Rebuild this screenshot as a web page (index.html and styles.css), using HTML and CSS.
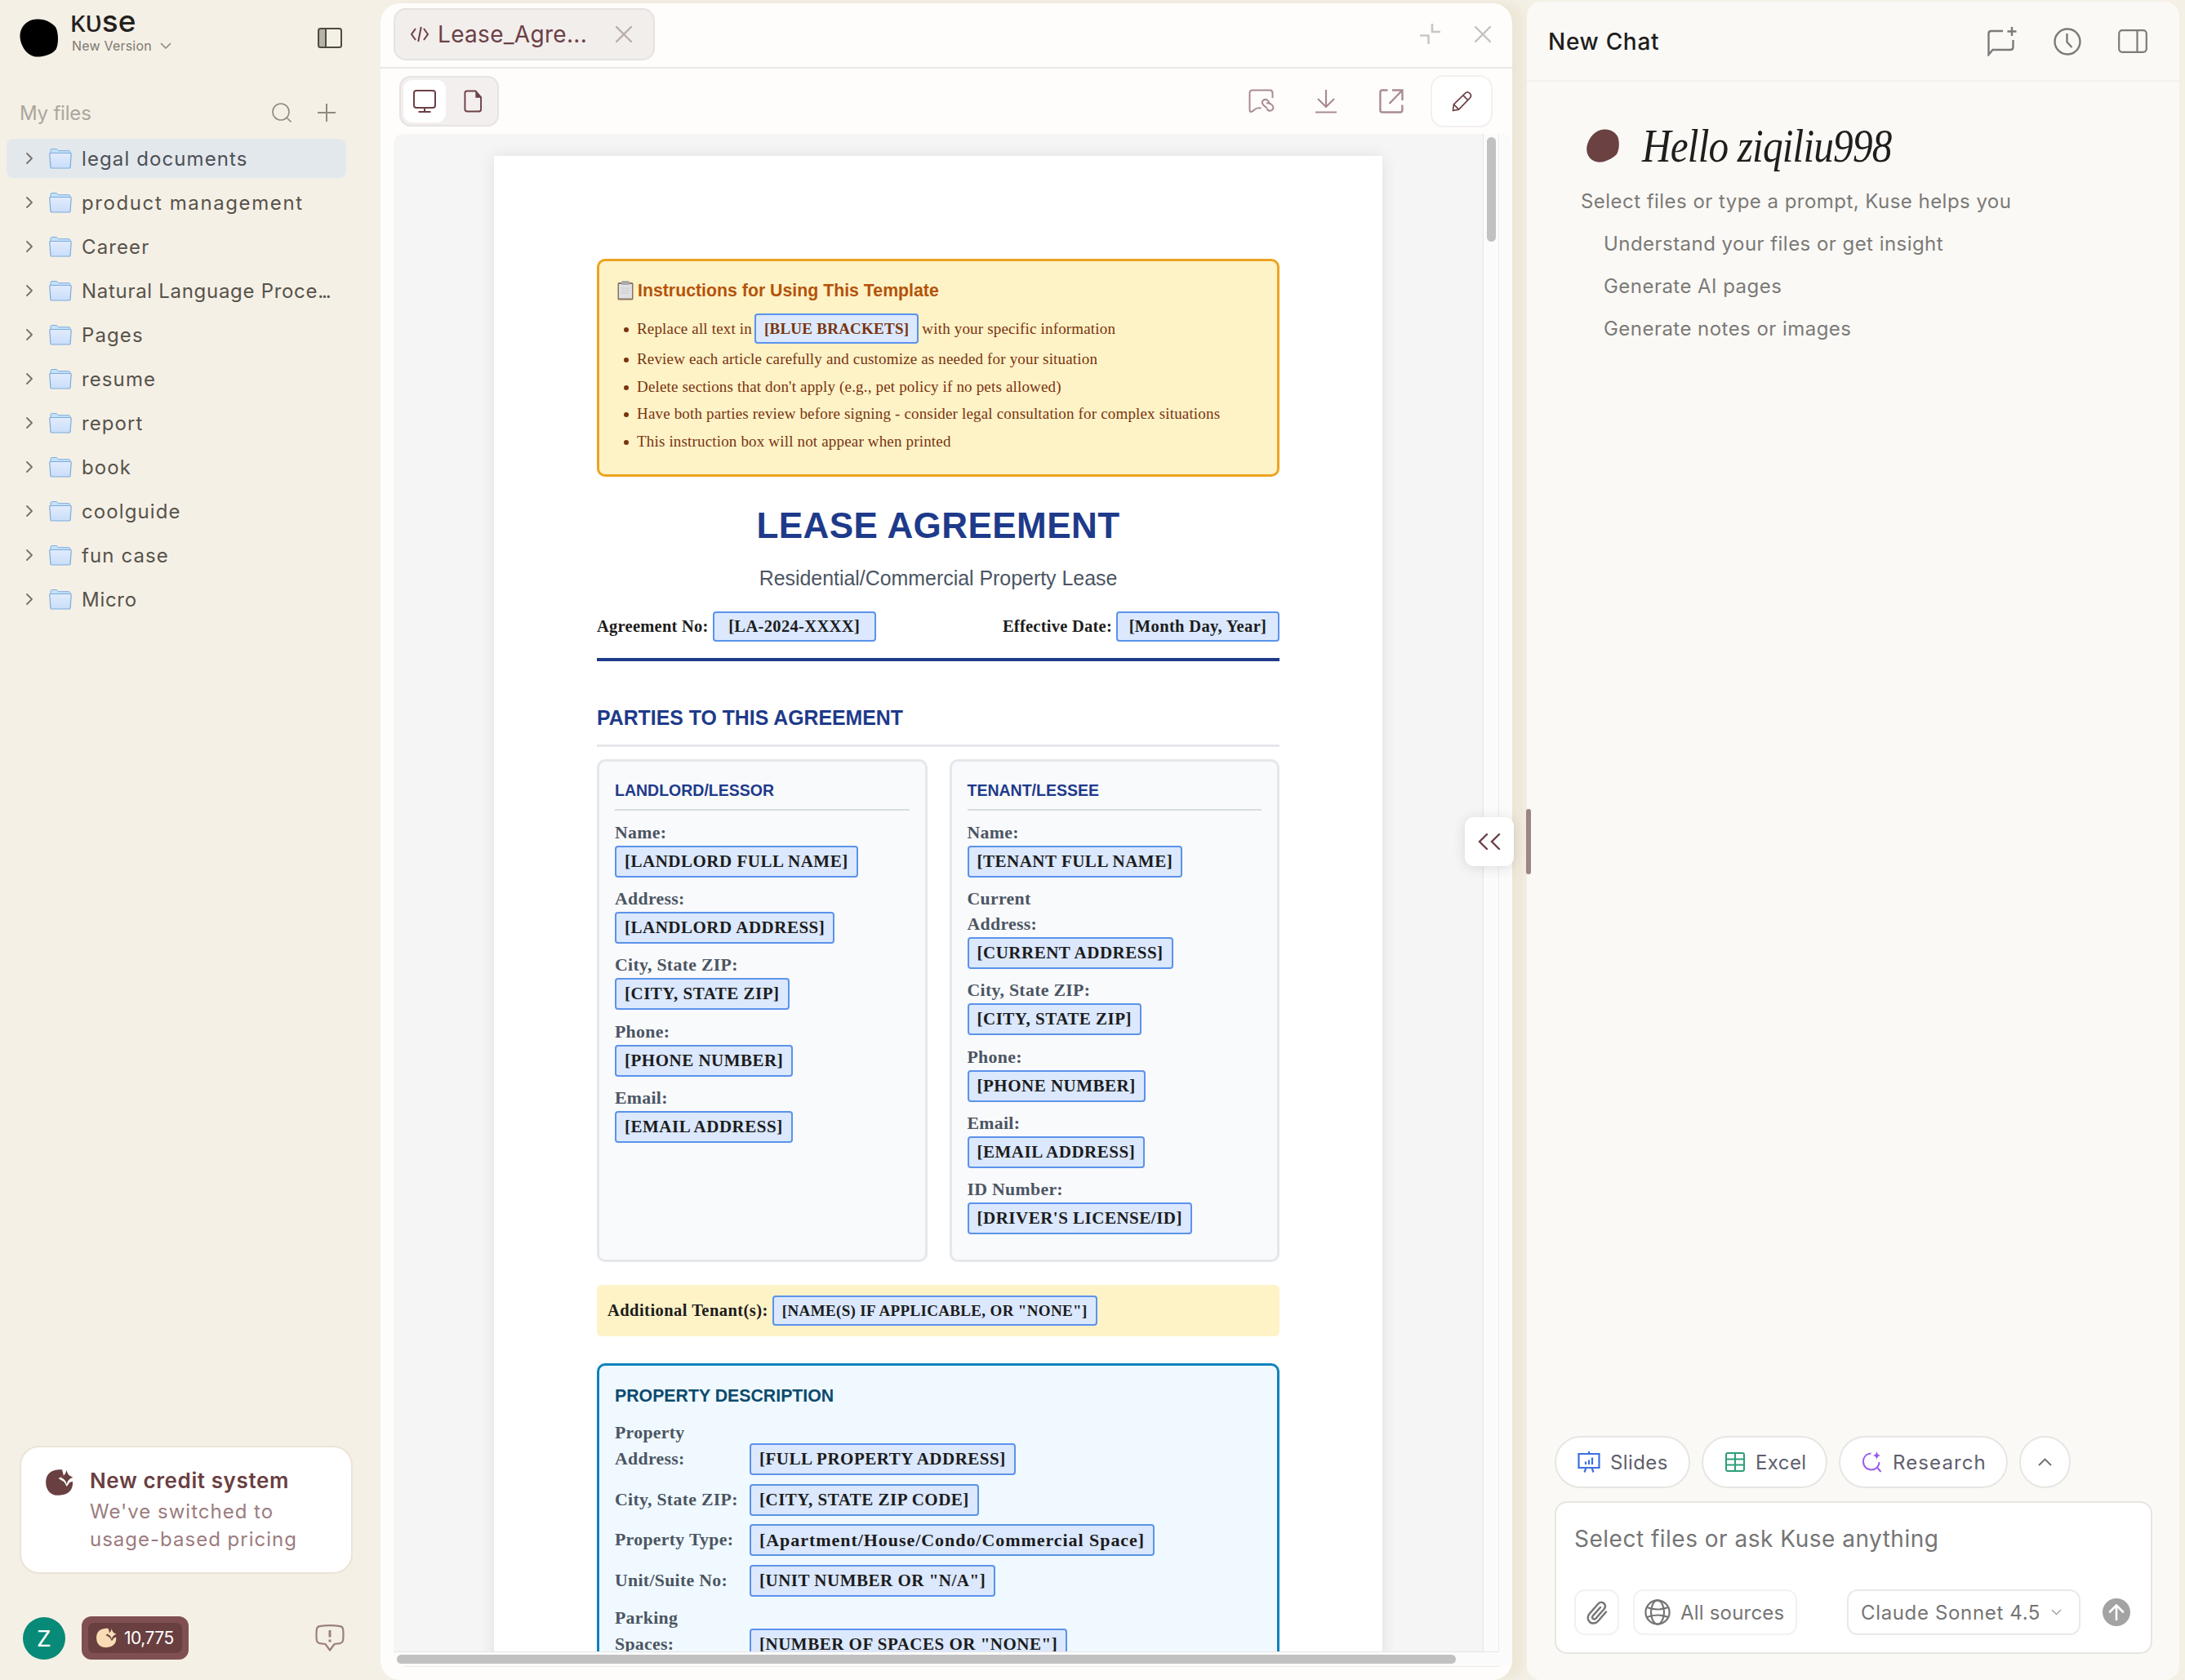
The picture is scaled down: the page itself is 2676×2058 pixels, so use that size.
FILE: index.html
```html
<!DOCTYPE html>
<html lang="en">
<head>
  <meta charset="UTF-8" />
  <meta name="viewport" content="width=device-width, initial-scale=1.0"/>
  <title>Kuse</title>
  <link rel="stylesheet" href="styles.css">
</head>
<body>
  <!-- shared icons -->
  <svg class="defs" width="0" height="0">
    <defs>
      <linearGradient id="folderFill" x1="0" y1="0" x2="0" y2="1">
        <stop offset="0" stop-color="#e2ebfc"/>
        <stop offset="1" stop-color="#c9defa"/>
      </linearGradient>
      <symbol id="chev" viewBox="0 0 8 14"><path d="M1 1l6 6-6 6" fill="none" stroke="currentColor" stroke-width="1.8" stroke-linecap="round" stroke-linejoin="round"/></symbol>
      <symbol id="folder" viewBox="0 0 28 26">
        <path d="M2 7V3.2C2 2 2.7 1.5 3.6 1.5h5.2c.8 0 1.2.4 1.7 1l.9 1.2h12.800c1 0 1.800.6 1.800 1.600V7z" fill="#c4e2fb" stroke="#7dabdc" stroke-width="1"/>
        <path d="M.8 7.600c0-.7.5-1.100 1.200-1.100h24c.7 0 1.200.5 1.200 1.100l-1.100 16c-.1.900-.6 1.400-1.500 1.400H3.400c-.9 0-1.400-.5-1.500-1.400z" fill="url(#folderFill)" stroke="#7dabdc" stroke-width="1.200"/>
      </symbol>
      <symbol id="credit" viewBox="0 0 34 32">
        <path d="M20 .3C9 -.8 1 4 .2 14 -.5 24 5 31.500 14 31.800c9 .4 17.500-3 18.800-12 .3-2 .4-3 0-5l-3.500 1.200-3.600 5-3-5.400-7.200-4.600 6.500-3.600z" fill="currentColor"/>
        <path d="M25.500.5c1 5 2.500 7 8 9.200-5.200 2-6.800 4-7.800 9-1-5-2.600-7-8-9 5.300-2 6.800-4.200 7.800-9.200z" fill="currentColor"/>
      </symbol>
    </defs>
  </svg>

  <aside class="sidebar">
    <div class="brand">
      <svg class="brand-blob" width="48" height="47" viewBox="0 0 48 47"><path d="M21 .5c7-.8 17 2.500 22.500 9C48 15 48 32 44.500 37.500 40 44 28 47 20 46.500 9 45.500 1 33 .5 22 .3 10 9 1 21 .5z"/></svg>
      <div class="brand-text">
        <div class="brand-name">ᴋᴜse</div>
        <div class="brand-version">New Version
          <svg width="14" height="8" viewBox="0 0 14 8"><path d="M1 1l6 6 6-6" fill="none" stroke="#8a867c" stroke-width="1.500"/></svg>
        </div>
      </div>
      <svg class="brand-panel" width="30" height="25" viewBox="0 0 30 25">
        <rect x="1" y="1" width="9" height="23" fill="#b5b2a8"/>
        <rect x="1" y="1" width="28" height="23" rx="2.500" fill="none" stroke="#4f4a42" stroke-width="2"/>
        <path d="M10 1v23" stroke="#4f4a42" stroke-width="2"/>
      </svg>
    </div>

    <div class="files-head">
      <span>My files</span>
      <svg class="search" width="24" height="24" viewBox="0 0 24 24"><circle cx="11" cy="11" r="10" fill="none" stroke="#8f8b80" stroke-width="1.600"/><path d="M18.500 18.500l5 5" stroke="#8f8b80" stroke-width="1.600"/></svg>
      <svg width="22" height="22" viewBox="0 0 22 22"><path d="M11 0v22M0 11h22" stroke="#8f8b80" stroke-width="2"/></svg>
    </div>

    <ul class="files">
      <li class="file active"><svg class="chev"><use href="#chev"/></svg><svg class="folder"><use href="#folder"/></svg><span>legal documents</span></li>
      <li class="file wide"><svg class="chev"><use href="#chev"/></svg><svg class="folder"><use href="#folder"/></svg><span>product management</span></li>
      <li class="file"><svg class="chev"><use href="#chev"/></svg><svg class="folder"><use href="#folder"/></svg><span>Career</span></li>
      <li class="file long"><svg class="chev"><use href="#chev"/></svg><svg class="folder"><use href="#folder"/></svg><span>Natural Language Proce<span class="dots">...</span></span></li>
      <li class="file"><svg class="chev"><use href="#chev"/></svg><svg class="folder"><use href="#folder"/></svg><span>Pages</span></li>
      <li class="file"><svg class="chev"><use href="#chev"/></svg><svg class="folder"><use href="#folder"/></svg><span>resume</span></li>
      <li class="file"><svg class="chev"><use href="#chev"/></svg><svg class="folder"><use href="#folder"/></svg><span>report</span></li>
      <li class="file"><svg class="chev"><use href="#chev"/></svg><svg class="folder"><use href="#folder"/></svg><span>book</span></li>
      <li class="file"><svg class="chev"><use href="#chev"/></svg><svg class="folder"><use href="#folder"/></svg><span>coolguide</span></li>
      <li class="file"><svg class="chev"><use href="#chev"/></svg><svg class="folder"><use href="#folder"/></svg><span>fun case</span></li>
      <li class="file long"><svg class="chev"><use href="#chev"/></svg><svg class="folder"><use href="#folder"/></svg><span>Micro</span></li>
    </ul>

    <div class="credit-card">
      <svg class="credit-icon"><use href="#credit"/></svg>
      <div>
        <div class="credit-title">New credit system</div>
        <div class="credit-sub">We've switched to<br>usage-based pricing</div>
      </div>
    </div>

    <div class="account">
      <div class="avatar">Z</div>
      <div class="credits"><div class="credits-inner"><svg class="coin"><use href="#credit"/></svg><span>10,775</span></div></div>
      <svg class="feedback" width="36" height="34" viewBox="0 0 36 34">
        <path d="M5.500 2.200Q18 .2 30.500 2.200Q34 2.800 34.200 6.500Q34.800 12 34.200 18.500Q33.800 22.500 30 23.200L23.500 24L18 31.500L12.500 24L6 23.200Q2 22.500 1.800 18.500Q1.200 12 1.800 6.500Q2 2.800 5.500 2.200z" fill="none" stroke="#9b7f7e" stroke-width="2.200" stroke-linejoin="round"/>
        <path d="M18 7v8.500M18 18.500v3" stroke="#9b7f7e" stroke-width="3"/>
      </svg>
    </div>
  </aside>

  <main class="viewer">
    <div class="tabs">
      <div class="tab">
        <svg width="24" height="20" viewBox="0 0 24 20"><path d="M7 3L2 10l5 7M17 3l5 7-5 7M13.800 1l-3.600 18" fill="none" stroke="#6b4046" stroke-width="2"/></svg>
        <span>Lease_Agre...</span>
        <svg width="20" height="20" viewBox="0 0 20 20"><path d="M1 1l18 18M19 1L1 19" stroke="#b9b0ad" stroke-width="2.400" stroke-linecap="round"/></svg>
      </div>
      <svg class="collapse" width="26" height="26" viewBox="0 0 26 26"><path d="M15 0v10h10M0 14.500h10.500V25" fill="none" stroke="#cbc6c4" stroke-width="2.600"/></svg>
      <svg width="20" height="20" viewBox="0 0 20 20"><path d="M1 1l18 18M19 1L1 19" stroke="#c6c0be" stroke-width="2.400" stroke-linecap="round"/></svg>
    </div>

    <div class="toolbar">
      <div class="toggle">
        <div class="toggle-item on">
          <svg width="28" height="28" viewBox="0 0 28 28"><rect x="1" y="1" width="26" height="21" rx="3" fill="none" stroke="#6b4046" stroke-width="2"/><path d="M14 22v5M6.500 27h15" stroke="#6b4046" stroke-width="2"/></svg>
        </div>
        <div class="toggle-item doc">
          <svg width="23" height="28" viewBox="0 0 24 28"><path d="M15 1H4.500C2.500 1 1.500 2 1.500 3.500v21C1.500 26 2.500 27 4.500 27h15c1.500 0 2.500-1 2.500-2.500V9z" fill="none" stroke="#6b4046" stroke-width="2"/><path d="M15 1l7 8.500h-7z" fill="#6b4046"/></svg>
        </div>
      </div>
      <div class="actions">
        <svg width="32" height="30" viewBox="0 0 32 30" fill="none" stroke="#a98c90" stroke-width="2"><path d="M15.500 23.500c-5-1-7 .5-9.500 3-2 2-4.500 2-4.500-.5V5c0-2.500 1-3.500 3.500-3.500h21.500c2.500 0 3 1 3 3.500v6"/><path d="M24.500 18.500c2.500-3-3-7.500-6.500-4.500-3.500 3.500 2 7.500 5 9.500M22 17.500c4-1.500 10 3 8 7-2 3.500-6.500 2.500-7-.5"/></svg>
        <svg width="26" height="29" viewBox="0 0 26 29" fill="none" stroke="#a98c90" stroke-width="2.200"><path d="M13 0v21M3 11l10 10 10-10M0 27.500h26"/></svg>
        <svg width="30" height="30" viewBox="0 0 30 30" fill="none" stroke="#a98c90" stroke-width="2.400"><path d="M10.500 1.500H4c-1.800 0-2.600.8-2.600 2.600v21.800c0 1.800.8 2.600 2.600 2.600h21.800c1.800 0 2.600-.8 2.600-2.600V19.500M16 1.500h12.500V14M28 2L12.500 18"/></svg>
        <div class="edit">
          <svg width="25" height="25" viewBox="0 0 26 26" fill="none" stroke="#6b4046" stroke-width="1.700" stroke-linejoin="round"><path d="M1.500 24.500L2.500 16.500L17 2.500c2-2 4.500-1.500 6 0s2 4 0 6L9 23zM14.500 5l6 6M2.500 16.500L9 23"/></svg>
        </div>
      </div>
    </div>

    <div class="frame">
      <div class="canvas">
        <article class="page">
          <section class="instructions">
            <h4>
              <svg width="20" height="24" viewBox="0 0 20 24"><rect x=".5" y="2" width="19" height="21.500" rx="1.500" fill="#8b7462"/><rect x="2" y="4" width="16" height="17.500" fill="#dfe0e3"/><rect x="5" y="0" width="10" height="5" rx="1.500" fill="#aaa9a8"/><path d="M5 9h10M5 12h10M5 15h10" stroke="#c6c8cc"/></svg>
              <span>Instructions for Using This Template</span>
            </h4>
            <ul>
              <li class="tall"><span>Replace all text in</span> <span class="chip small">[BLUE BRACKETS]</span> <span class="after">with your specific information</span></li>
              <li>Review each article carefully and customize as needed for your situation</li>
              <li>Delete sections that don't apply (e.g., pet policy if no pets allowed)</li>
              <li>Have both parties review before signing - consider legal consultation for complex situations</li>
              <li>This instruction box will not appear when printed</li>
            </ul>
          </section>

          <header class="doc-head">
            <h1>LEASE AGREEMENT</h1>
            <p>Residential/Commercial Property Lease</p>
            <div class="meta">
              <div><b>Agreement No:</b><span class="chip meta-chip">[LA-2024-XXXX]</span></div>
              <div><b>Effective Date:</b><span class="chip meta-chip">[Month Day, Year]</span></div>
            </div>
          </header>

          <h2>PARTIES TO THIS AGREEMENT</h2>

          <div class="parties">
            <section class="party">
              <h3>LANDLORD/LESSOR</h3>
              <div class="field"><label>Name:</label><span class="chip">[LANDLORD FULL NAME]</span></div>
              <div class="field"><label>Address:</label><span class="chip">[LANDLORD ADDRESS]</span></div>
              <div class="field"><label>City, State ZIP:</label><span class="chip">[CITY, STATE ZIP]</span></div>
              <div class="field"><label>Phone:</label><span class="chip">[PHONE NUMBER]</span></div>
              <div class="field"><label>Email:</label><span class="chip">[EMAIL ADDRESS]</span></div>
            </section>
            <section class="party">
              <h3>TENANT/LESSEE</h3>
              <div class="field"><label>Name:</label><span class="chip">[TENANT FULL NAME]</span></div>
              <div class="field"><label>Current<br>Address:</label><span class="chip">[CURRENT ADDRESS]</span></div>
              <div class="field"><label>City, State ZIP:</label><span class="chip">[CITY, STATE ZIP]</span></div>
              <div class="field"><label>Phone:</label><span class="chip">[PHONE NUMBER]</span></div>
              <div class="field"><label>Email:</label><span class="chip">[EMAIL ADDRESS]</span></div>
              <div class="field"><label>ID Number:</label><span class="chip">[DRIVER'S LICENSE/ID]</span></div>
            </section>
          </div>

          <div class="additional"><b>Additional Tenant(s):</b><span class="chip small">[NAME(S) IF APPLICABLE, OR "NONE"]</span></div>

          <section class="property">
            <h3>PROPERTY DESCRIPTION</h3>
            <div class="row"><label>Property<br>Address:</label><span class="chip">[FULL PROPERTY ADDRESS]</span></div>
            <div class="row"><label>City, State ZIP:</label><span class="chip">[CITY, STATE ZIP CODE]</span></div>
            <div class="row"><label>Property Type:</label><span class="chip mixed">[Apartment/House/Condo/Commercial Space]</span></div>
            <div class="row"><label>Unit/Suite No:</label><span class="chip">[UNIT NUMBER OR "N/A"]</span></div>
            <div class="row"><label>Parking<br>Spaces:</label><span class="chip">[NUMBER OF SPACES OR "NONE"]</span></div>
          </section>
        </article>
      </div>
      <div class="scroll-y"><div class="thumb-y"></div></div>
      <div class="scroll-x"><div class="thumb-x"></div></div>
    </div>

    <div class="expand">
      <svg width="28" height="20" viewBox="0 0 28 20"><path d="M11 1L2 10l9 9M26 1l-9 9 9 9" fill="none" stroke="#6b4046" stroke-width="2.400" stroke-linecap="round"/></svg>
    </div>
  </main>

  <section class="chat">
    <div class="handle"></div>
    <header class="chat-head">
      <span>New Chat</span>
      <div class="chat-icons">
        <svg width="36" height="36" viewBox="0 0 36 36" fill="none" stroke="#7c7b79" stroke-width="2.400"><path d="M19 5H5C3 5 1.500 6 1.500 8v26l5-6H28c2.500 0 3.500-1 3.500-3.500V16M30 0v11M24.500 5.500h11"/></svg>
        <svg width="34" height="34" viewBox="0 0 34 34" fill="none" stroke="#7c7b79" stroke-width="2.400"><circle cx="17" cy="17" r="15.500"/><path d="M16.500 7v10.500l6 6.500"/></svg>
        <svg width="36" height="29" viewBox="0 0 36 29" fill="none" stroke="#7c7b79" stroke-width="2.200"><rect x="1.200" y="1.200" width="33.600" height="26.600" rx="4"/><path d="M23.500 1v27"/></svg>
      </div>
    </header>

    <div class="welcome">
      <div class="hello">
        <svg width="42" height="42" viewBox="0 0 42 42"><path d="M23 .5C12 1 4 10 1.500 21c-1.500 9 3 18 13 19.500C22 41.500 32 37 38 31c3.500-6 3.500-15 1.500-21C37 4 30 0 23 .5z" fill="#6b4142"/></svg>
        <span>Hello ziqiliu998</span>
      </div>
      <p>Select files or type a prompt, Kuse helps you</p>
      <ul>
        <li>Understand your files or get insight</li>
        <li>Generate AI pages</li>
        <li>Generate notes or images</li>
      </ul>
    </div>

    <div class="composer">
      <div class="pills">
        <div class="pill slides">
          <svg width="28" height="26" viewBox="0 0 28 26" fill="none" stroke="#3d6fe0" stroke-width="2.200"><path d="M14 0v3M1.500 3h25v17h-25zM10.500 20l-2 5.500M17.500 20l2 5.500M10 16v-3.500M14 16v-5.500M18 16V7.500"/></svg>
          <span>Slides</span>
        </div>
        <div class="pill excel">
          <svg width="26" height="26" viewBox="0 0 26 26" fill="none" stroke="#2f9e78" stroke-width="2"><rect x="2" y="2" width="22" height="22" rx="2"/><path d="M13 2v22M2 9.500h22M2 16.500h22"/></svg>
          <span>Excel</span>
        </div>
        <div class="pill research">
          <svg width="26" height="26" viewBox="0 0 26 26"><path d="M11.500 2.500C5 3 2 7.500 2 12.500c0 6 4.500 10 10 10s9.500-4 9.500-9.500M18.500 19l5 6" fill="none" stroke="#9a5cec" stroke-width="2"/><path d="M18.500 0c.8 3.200 1.800 4.200 4.800 5-3 .8-4 1.800-4.800 5-.8-3.200-1.800-4.200-4.800-5 3-.8 4-1.800 4.800-5z" fill="#9a5cec"/></svg>
          <span>Research</span>
        </div>
        <div class="pill more">
          <svg width="17" height="10" viewBox="0 0 17 10"><path d="M1 9l7.500-7.500L16 9" fill="none" stroke="#6f6d6a" stroke-width="1.800"/></svg>
        </div>
      </div>

      <div class="prompt">
        <div class="placeholder">Select files or ask Kuse anything</div>
        <div class="prompt-bar">
          <div class="btn clip">
            <svg width="28" height="30" viewBox="0 0 28 30" fill="none" stroke="#747474" stroke-width="2.400" stroke-linecap="round"><path d="M25 14.500L15.500 25.500c-3 3.500-7.500 4-10.500 1.500s-3-7-.5-10L15 5c2-2.500 5-2.800 7.200-1 2 1.800 2.300 4.500.4 7L12.500 22.500c-1 1.200-2.600 1.300-3.600.4s-1-2.400 0-3.600L18 9"/></svg>
          </div>
          <div class="btn sources">
            <svg width="32" height="32" viewBox="0 0 32 32" fill="none" stroke="#747474" stroke-width="2.200"><circle cx="16" cy="16" r="14.600"/><ellipse cx="16" cy="16" rx="8" ry="14.600"/><path d="M3 10q13 5 26 0M3 22q13-5 26 0"/></svg>
            <span>All sources</span>
          </div>
          <div class="btn model">
            <span>Claude Sonnet 4.5</span>
            <svg width="13" height="8" viewBox="0 0 13 8"><path d="M1 1l5.500 5.500L12 1" fill="none" stroke="#a0a0a0" stroke-width="1.400"/></svg>
          </div>
          <svg class="send" width="34" height="34" viewBox="0 0 34 34"><circle cx="17" cy="17" r="17" fill="#a3a3a3"/><path d="M17 26V9M9 16.500L17 8.500l8 8" fill="none" stroke="#fff" stroke-width="2.600" stroke-linecap="round" stroke-linejoin="round"/></svg>
        </div>
      </div>
    </div>
  </section>
</body>
</html>
```
FILE: styles.css
```css
:root {
  --maroon: #6b4046;
  --navy: #1e3a8a;
  --sand: #f5f0e6;
  --sans: Inter, "Open Sans", sans-serif;
  --serif: "Liberation Serif", serif;
  --arial: "Liberation Sans", sans-serif;
}

* {
  box-sizing: border-box;
  margin: 0;
  padding: 0;
}

body {
  display: flex;
  width: 2676px;
  height: 2058px;
  overflow: hidden;
  background: var(--sand);
  font-family: var(--sans);
  font-size: 24px;
}

svg {
  display: block;
  flex-shrink: 0;
}

.defs {
  position: absolute;
}

ul {
  list-style: none;
}

/* sidebar */

.sidebar {
  display: flex;
  flex-direction: column;
  width: 466px;
  flex-shrink: 0;
  padding-bottom: 25px;
}

.brand {
  display: flex;
  height: 116px;
  padding: 0 47px 0 24px;
}

.brand-blob {
  margin-top: 23px;
}

.brand-text {
  flex: 1;
  padding: 8px 0 0 14px;
}

.brand-name {
  height: 36px;
  line-height: 36px;
  font-size: 37px;
  font-weight: 500;
  color: #23211d;
}

.brand-version {
  display: flex;
  align-items: center;
  gap: 10px;
  height: 24px;
  padding-left: 2px;
  font-size: 16px;
  letter-spacing: 0.2px;
  color: #7d796f;
}

.brand-panel {
  margin-top: 34px;
}

.files-head {
  display: flex;
  align-items: center;
  height: 44px;
  padding: 0 55px 0 24px;
  letter-spacing: -0.2px;
  color: #aba69b;
}

.files-head span {
  flex: 1;
}

.files-head .search {
  margin-right: 32px;
}

.files {
  display: flex;
  flex-direction: column;
  gap: 6px;
  padding: 10px 42px 0 8px;
}

.file {
  display: flex;
  align-items: center;
  height: 48px;
  padding-left: 24px;
  border-radius: 8px;
  color: #57534b;
  letter-spacing: 1.1px;
  white-space: nowrap;
}

.file.wide {
  letter-spacing: 1.6px;
}

.file.long {
  letter-spacing: 0.7px;
}

.file.active {
  background: #e3e8ed;
  color: #4d5156;
}

.file .chev {
  width: 8px;
  height: 14px;
  margin-right: 20px;
  color: #77736a;
}

.file .folder {
  width: 28px;
  height: 26px;
  margin-right: 12px;
}

.dots {
  letter-spacing: -2.200px;
}

.credit-card {
  display: flex;
  width: 408px;
  height: 157px;
  margin: auto 0 0 24px;
  padding: 23px 0 0 30px;
  border: 2px solid #ede3d8;
  border-radius: 24px;
  background: #fff;
}

.credit-icon {
  width: 34px;
  height: 32px;
  margin: 4px 20px 0 0;
  color: #6a3f41;
}

.credit-title {
  line-height: 36px;
  font-weight: 600;
  font-size: 26px;
  letter-spacing: 0.6px;
  color: #6a3f41;
}

.credit-sub {
  margin-top: 3px;
  line-height: 33.500px;
  letter-spacing: 1px;
  color: #9b7c7e;
}

.account {
  display: flex;
  align-items: center;
  margin: 52px 44px 0 28px;
}

.avatar {
  width: 52px;
  height: 52px;
  border-radius: 50%;
  background: #078a78;
  color: #fff;
  font-family: Roboto, sans-serif;
  font-size: 28px;
  line-height: 53px;
  text-align: center;
}

.credits {
  width: 131px;
  height: 53px;
  margin: 0 auto 0 20px;
  padding: 8px;
  border-radius: 12px;
  background: #7f4f52;
}

.credits-inner {
  display: flex;
  align-items: center;
  height: 37px;
  padding-left: 10px;
  border-radius: 7px;
  background: #693f40;
  color: #fff;
  font-size: 21px;
  letter-spacing: -0.5px;
}

.coin {
  width: 25px;
  height: 25px;
  margin-right: 9px;
  color: #f9dcb4;
}

/* document viewer */

.viewer {
  position: relative;
  width: 1386px;
  flex-shrink: 0;
  margin: 4px 18px 0 0;
  border-radius: 24px;
  background: #fefdfc;
  box-shadow: 14px 0 14px rgba(190, 180, 130, 0.16);
}

.tabs {
  display: flex;
  align-items: center;
  height: 80px;
  padding: 0 26px 2px 16px;
  border-bottom: 2px solid #e9e8e7;
}

.tab {
  display: flex;
  align-items: center;
  width: 320px;
  height: 64px;
  padding-left: 18px;
  border: 2px solid #e6e2e0;
  border-radius: 15px;
  background: #f2eeec;
  color: var(--maroon);
  font-size: 28px;
  letter-spacing: 0.3px;
}

.tab span {
  width: 228px;
  padding-left: 10px;
}

.collapse {
  margin: 0 41px 0 auto;
}

.toolbar {
  display: flex;
  align-items: center;
  justify-content: space-between;
  height: 80px;
  padding: 0 24px 0 23px;
}

.toggle {
  display: flex;
  width: 122px;
  height: 62px;
  padding: 3px;
  border: 2px solid #e7e3e1;
  border-radius: 14px;
  background: #f3efee;
}

.toggle-item {
  display: flex;
  flex: 1;
  align-items: center;
  justify-content: center;
  border-radius: 11px;
}

.toggle-item.on {
  flex: 0 0 52px;
  background: #fff;
}

.toggle-item.doc {
  padding-left: 6px;
}

.actions {
  display: flex;
  align-items: center;
}

.actions > svg:nth-child(1) {
  margin-right: 50px;
}

.actions > svg:nth-child(2) {
  margin-right: 52px;
}

.edit {
  display: flex;
  align-items: center;
  justify-content: center;
  width: 76px;
  height: 64px;
  margin-left: 33px;
  border: 2px solid #f2efee;
  border-radius: 16px;
  background: #fff;
}

.frame {
  display: grid;
  grid-template-columns: 1334px 20px;
  grid-template-rows: 1859px 19px;
  margin-left: 16px;
  border-radius: 12px 12px 16px 16px;
  background: #fbfbfb;
  overflow: hidden;
}

.canvas {
  overflow: hidden;
  background: #f5f5f5;
  padding: 27px 0 0 123px;
}

.page {
  width: 1088px;
  height: 2200px;
  padding: 126px 126px 0;
  background: #fff;
  box-shadow: 0 0 18px rgba(0, 0, 0, 0.09);
  font-family: var(--serif);
}

.scroll-y {
  padding: 4px 0 0 4px;
  border-left: 1px solid #e6e6e6;
  border-right: 1px solid #ececec;
}

.thumb-y {
  width: 11px;
  height: 128px;
  border-radius: 6px;
  background: #c1c1c1;
}

.scroll-x {
  grid-column: 1 / 3;
  padding: 3px 4px;
  border-top: 1px solid #e6e6e6;
  border-bottom: 1px solid #ececec;
}

.thumb-x {
  width: 1297px;
  height: 11px;
  border-radius: 6px;
  background: #c1c1c1;
}

.expand {
  position: absolute;
  left: 1328px;
  top: 997px;
  display: flex;
  align-items: center;
  justify-content: center;
  width: 60px;
  height: 60px;
  border-radius: 11px;
  background: #fff;
  box-shadow: 0 2px 16px rgba(0, 0, 0, 0.12);
}

/* lease document */

.chip {
  display: inline-flex;
  align-items: center;
  height: 39px;
  padding: 0 10px;
  border: 2px solid #5b93ea;
  border-radius: 4px;
  background: #dbe8fe;
  color: #1c1c1c;
  font-size: 21px;
  font-weight: bold;
  letter-spacing: 0.5px;
  white-space: nowrap;
}

.chip.small {
  height: 37px;
  font-size: 19px;
  letter-spacing: 0.35px;
}

.chip.mixed {
  font-size: 22px;
  letter-spacing: 0.950px;
}

.instructions {
  height: 267px;
  padding: 20px 22px 0;
  border: 3px solid #eda320;
  border-radius: 10px;
  background: #fef2c7;
  color: #78350f;
}

.instructions h4 {
  display: flex;
  align-items: center;
  height: 32px;
  margin-bottom: 10px;
  font-family: var(--arial);
  font-size: 21.300px;
  color: #b45309;
}

.instructions h4 span {
  padding-left: 5px;
}

.instructions li {
  display: flex;
  align-items: center;
  height: 33.700px;
  font-size: 19px;
  letter-spacing: 0.17px;
  white-space: nowrap;
}

.instructions li::before {
  content: "";
  width: 6px;
  height: 6px;
  margin: 2px 10px 0 8px;
  border-radius: 50%;
  background: #78350f;
}

.instructions li.tall {
  height: 41px;
}

.instructions .chip {
  margin: 0 4px 0 3px;
  letter-spacing: 0.250px;
  color: #78350f;
}

.doc-head {
  margin-top: 35px;
  padding-bottom: 20px;
  border-bottom: 4px solid var(--navy);
  text-align: center;
}

.doc-head h1 {
  line-height: 50px;
  font-family: var(--arial);
  font-size: 44px;
  letter-spacing: 0.450px;
  color: var(--navy);
}

.doc-head p {
  margin-top: 24px;
  line-height: 31px;
  font-family: var(--arial);
  font-size: 24.900px;
  color: #4b5563;
}

.meta {
  display: flex;
  justify-content: space-between;
  margin-top: 25px;
  color: #1c1c1c;
}

.page b {
  font-size: 20.500px;
  letter-spacing: 0.250px;
}

.meta div {
  display: flex;
  align-items: center;
  gap: 5px;
}

.meta .meta-chip {
  justify-content: center;
  width: 200px;
  height: 37px;
  font-size: 20.500px;
  letter-spacing: 0.35px;
}

.page h2 {
  margin-top: 53px;
  padding-bottom: 15px;
  border-bottom: 3px solid #e5e7eb;
  line-height: 34px;
  font-family: var(--arial);
  font-size: 24.850px;
  color: var(--navy);
}

.parties {
  display: flex;
  gap: 27px;
  height: 616px;
  margin-top: 15px;
}

.party {
  flex: 1;
  padding: 22px 19px 0;
  border: 3px solid #e5e7eb;
  border-radius: 10px;
  background: #f9fafc;
}

.party h3 {
  margin-bottom: 12px;
  padding-bottom: 10px;
  border-bottom: 2px solid #d5dde0;
  line-height: 26px;
  font-family: var(--arial);
  font-size: 19.500px;
  color: var(--navy);
}

.field {
  display: flex;
  flex-direction: column;
  align-items: flex-start;
  margin-bottom: 11.200px;
}

label {
  font-size: 21.800px;
  font-weight: bold;
  line-height: 31px;
  letter-spacing: 0.3px;
  color: #4b5563;
  white-space: nowrap;
}

.additional {
  display: flex;
  align-items: center;
  gap: 5px;
  height: 63px;
  margin-top: 28px;
  padding-left: 13px;
  border-radius: 6px;
  background: #fef2c7;
  color: #1c1c1c;
}

.additional b {
  letter-spacing: 0.450px;
}

.property {
  height: 600px;
  margin-top: 33px;
  padding: 23px 19px 0;
  border: 3px solid #0e82bd;
  border-radius: 10px;
  background: #f0f9ff;
}

.property h3 {
  margin-bottom: 15px;
  line-height: 28px;
  font-family: var(--arial);
  font-size: 21.300px;
  color: #0c4a6e;
}

.row {
  display: flex;
  align-items: flex-end;
  margin-bottom: 10.500px;
}

.row label {
  width: 165px;
  padding-bottom: 4px;
  line-height: 32px;
}

/* chat */

.chat {
  position: relative;
  display: flex;
  flex-direction: column;
  width: 799px;
  flex-shrink: 0;
  margin-top: 2px;
  border-radius: 18px;
  background: #faf9f6;
}

.handle {
  position: absolute;
  left: -1px;
  top: 989px;
  width: 6px;
  height: 80px;
  border-radius: 3px;
  background: #9c8585;
}

.chat-head {
  display: flex;
  align-items: center;
  justify-content: space-between;
  height: 98px;
  padding: 1px 39px 0 26px;
  border-bottom: 2px solid #f3f2ee;
  font-size: 28px;
  font-weight: 500;
  letter-spacing: 0.7px;
  color: #1f1e1c;
}

.chat-icons {
  display: flex;
  align-items: center;
  gap: 45px;
}

.welcome {
  padding: 50px 0 0 66px;
  letter-spacing: 0.460px;
  color: #7b7a77;
}

.hello {
  display: flex;
  align-items: center;
  height: 58px;
  padding-left: 6px;
}

.hello span {
  margin-left: 27px;
  font-family: var(--serif);
  font-size: 58px;
  font-style: italic;
  letter-spacing: -1px;
  line-height: 58px;
  white-space: nowrap;
  color: #1f1e1c;
  transform: scaleX(0.85);
  transform-origin: left;
}

.welcome p {
  margin-top: 13px;
  line-height: 52px;
}

.welcome li {
  padding-left: 28px;
  line-height: 52px;
}

.composer {
  margin: auto 33px 32px 34px;
}

.pills {
  display: flex;
  gap: 14px;
}

.pill {
  display: flex;
  align-items: center;
  height: 64px;
  padding-left: 26px;
  border: 2px solid #e7e6e3;
  border-radius: 32px;
  background: #fff;
  color: #5f5f6b;
}

.pill span {
  padding-left: 12px;
  letter-spacing: 0.400px;
}

.slides {
  width: 166px;
}

.excel {
  width: 154px;
}

.research {
  width: 207px;
}

.research span {
  letter-spacing: 1.1px;
}

.more {
  justify-content: center;
  width: 63px;
  padding: 0;
}

.prompt {
  height: 187px;
  margin-top: 16px;
  padding: 24px 25px 0 22px;
  border: 2px solid #e6e5e2;
  border-radius: 15px;
  background: #fff;
  color: #757575;
}

.placeholder {
  height: 82px;
  line-height: 40px;
  font-size: 28px;
  letter-spacing: 0.5px;
}

.prompt-bar {
  display: flex;
  align-items: center;
}

.btn {
  display: flex;
  align-items: center;
  height: 56px;
  border: 2px solid #f1f1f1;
  border-radius: 13px;
}

.clip {
  justify-content: center;
  width: 55px;
}

.sources {
  width: 201px;
  margin-left: 17px;
  padding-left: 12px;
  gap: 12px;
  letter-spacing: 0.2px;
}

.model {
  width: 286px;
  margin: 0 27px 0 auto;
  padding: 0 21px 0 15px;
  justify-content: space-between;
  letter-spacing: 0.65px;
  border-color: #e9e9e9;
}
```
